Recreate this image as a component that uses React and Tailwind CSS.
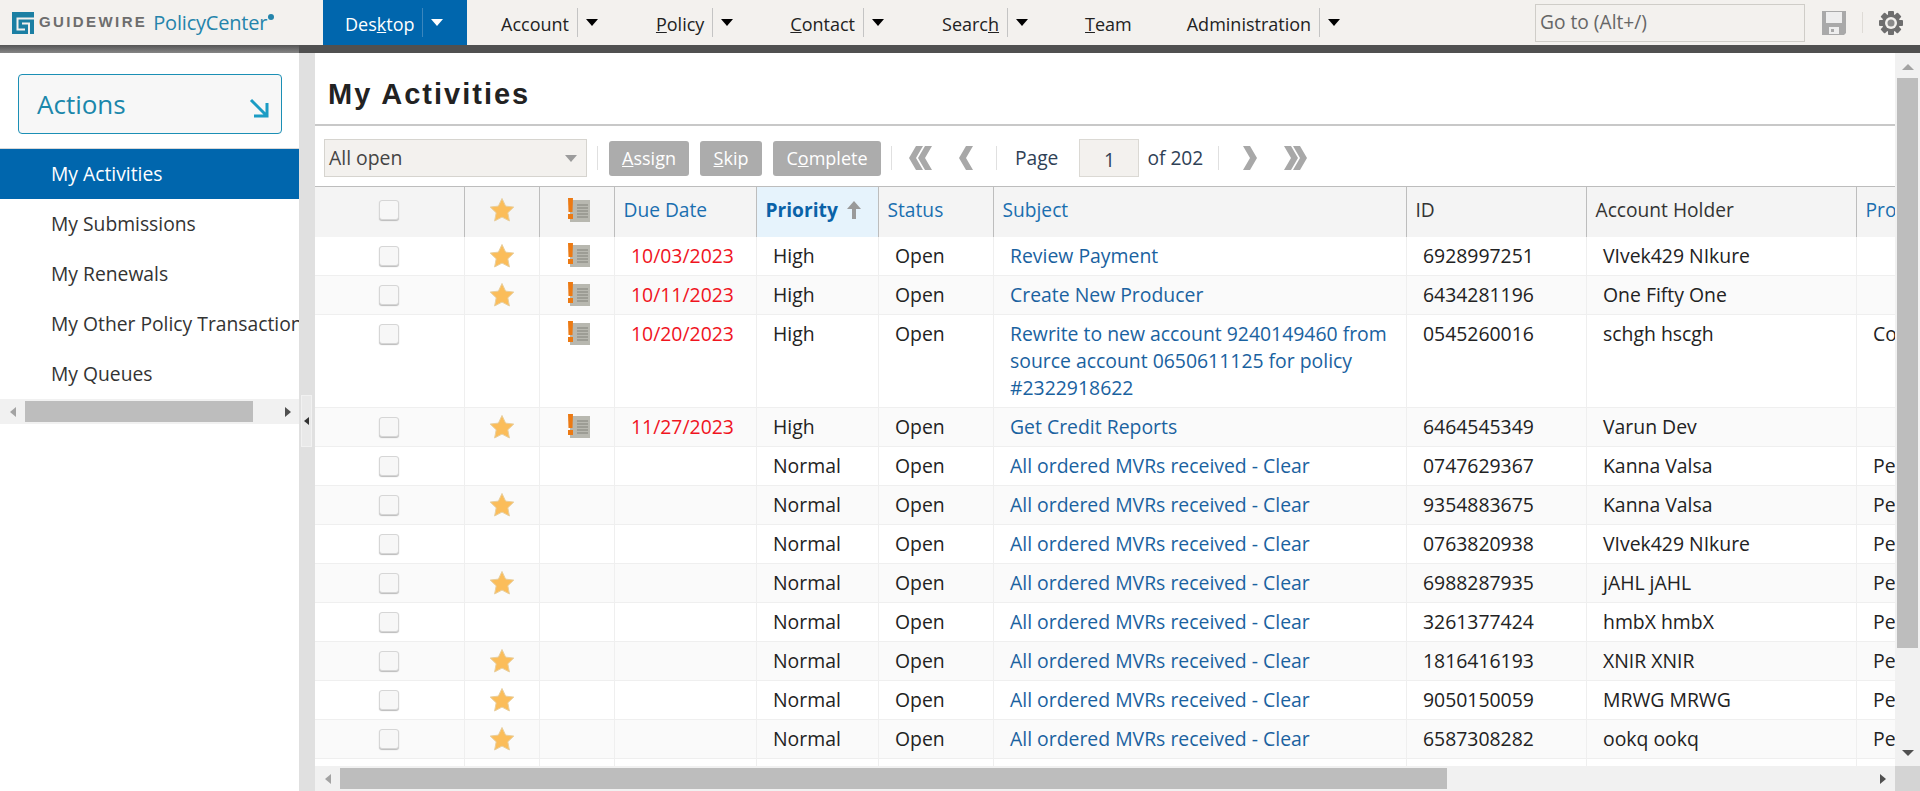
import React from "react";

const navItems = [
  { pre: "Account", u: "", post: "", caret: true, left: 34 },
  { pre: "", u: "P", post: "olicy", caret: true, left: 58 },
  { pre: "", u: "C", post: "ontact", caret: true, left: 57 },
  { pre: "Searc", u: "h", post: "", caret: true, left: 58 },
  { pre: "", u: "T", post: "eam", caret: false, left: 57 },
  { pre: "Administration", u: "", post: "", caret: true, left: 55 },
];

const sideItems = ["My Activities", "My Submissions", "My Renewals", "My Other Policy Transactions", "My Queues"];

const mvr = "All ordered MVRs received - Clear";
const rows = [
  { star: 1, flag: 1, due: "10/03/2023", pri: "High", subject: "Review Payment", id: "6928997251", holder: "VIvek429 NIkure", prod: "" },
  { star: 1, flag: 1, due: "10/11/2023", pri: "High", subject: "Create New Producer", id: "6434281196", holder: "One Fifty One", prod: "" },
  { star: 0, flag: 1, due: "10/20/2023", pri: "High", subject: "Rewrite to new account 9240149460 from source account 0650611125 for policy #2322918622", id: "0545260016", holder: "schgh hscgh", prod: "Commercial" },
  { star: 1, flag: 1, due: "11/27/2023", pri: "High", subject: "Get Credit Reports", id: "6464545349", holder: "Varun Dev", prod: "" },
  { star: 0, flag: 0, due: "", pri: "Normal", subject: mvr, id: "0747629367", holder: "Kanna Valsa", prod: "Personal Auto" },
  { star: 1, flag: 0, due: "", pri: "Normal", subject: mvr, id: "9354883675", holder: "Kanna Valsa", prod: "Personal Auto" },
  { star: 0, flag: 0, due: "", pri: "Normal", subject: mvr, id: "0763820938", holder: "VIvek429 NIkure", prod: "Personal Auto" },
  { star: 1, flag: 0, due: "", pri: "Normal", subject: mvr, id: "6988287935", holder: "jAHL jAHL", prod: "Personal Auto" },
  { star: 0, flag: 0, due: "", pri: "Normal", subject: mvr, id: "3261377424", holder: "hmbX hmbX", prod: "Personal Auto" },
  { star: 1, flag: 0, due: "", pri: "Normal", subject: mvr, id: "1816416193", holder: "XNIR XNIR", prod: "Personal Auto" },
  { star: 1, flag: 0, due: "", pri: "Normal", subject: mvr, id: "9050150059", holder: "MRWG MRWG", prod: "Personal Auto" },
  { star: 1, flag: 0, due: "", pri: "Normal", subject: mvr, id: "6587308282", holder: "ookq ookq", prod: "Personal Auto" },
];

function Caret({ className = "" }) {
  return <span className={`inline-block w-0 h-0 border-x-[6px] border-x-transparent border-t-[7px] ${className}`} />;
}

function Checkbox() {
  return <span className="block mx-auto w-5 h-5 rounded-[3px] bg-[#f7f7f7] border border-[#d6d6d6] shadow-[0_1px_1px_#bbb]" />;
}

function Star() {
  return (
    <svg width="26" height="26" viewBox="0 0 26 26" className="block mx-auto">
      <path d="M13 1.500l3.600 7.600 8.200 1-6 5.700 1.600 8.200L13 20.100 5.600 24l1.600-8.200-6-5.700 8.200-1z" fill="#fbbd5a" stroke="#e8cf9f" strokeWidth="1" />
    </svg>
  );
}

function EscalationIcon() {
  return (
    <svg width="22" height="24" viewBox="0 0 22 24" className="block mx-auto">
      <rect x="2" y="2" width="20" height="22" fill="#b8b8b0" />
      <path d="M9 7h11M9 10h11M9 13h11M9 16h11M9 19h11" stroke="#82827a" strokeWidth="1.200" />
      <path d="M0 0h5l-.5 14H.5z" fill="#ec7a14" />
      <rect x="0" y="16" width="5" height="5" fill="#ec7a14" />
    </svg>
  );
}

function Chevron({ double, right }) {
  return (
    <svg width={double ? 25 : 16} height="24" viewBox={double ? "0 0 25 24" : "0 0 16 24"} className={right ? "" : "-scale-x-100"}>
      <path d="M1 0h7l7 12-7 12H1l7-12z" fill="#a8a8a8" />
      {double && <path d="M10 0h7l7 12-7 12h-7l7-12z" fill="#a8a8a8" />}
    </svg>
  );
}

function Btn({ pre, u, post, className }) {
  return (
    <button className={`h-[35px] rounded-[3px] bg-[#acacac] text-white text-[18px] ${className}`}>
      {pre}<span className="underline">{u}</span>{post}
    </button>
  );
}

function Gear() {
  return (
    <svg width="24" height="24" viewBox="0 0 24 24">
      {[0, 45, 90, 135].map((a) => (
        <rect key={a} x="9" y="0" width="6" height="24" rx="1" fill="#6e6e6e" transform={`rotate(${a} 12 12)`} />
      ))}
      <circle cx="12" cy="12" r="9" fill="#6e6e6e" />
      <circle cx="12" cy="12" r="6" fill="#f3f1ee" />
      <circle cx="12" cy="12" r="3.500" fill="#8a8a8a" />
    </svg>
  );
}

function TopBar() {
  return (
    <header className="h-[45px] bg-[#f3f1ee] flex items-center shrink-0">
      <div className="w-[323px] flex items-center pl-3 overflow-hidden">
        <svg width="22" height="22" viewBox="0 0 22 22" className="shrink-0">
          <rect width="22" height="22" fill="#1b7fa3" />
          <path d="M22 6.500H5.500V17.500H13M10 11.500H17V22" stroke="#f3f1ee" strokeWidth="2" fill="none" />
        </svg>
        <span className="ml-[5px] font-['Liberation_Sans',sans-serif] font-bold text-[15px] tracking-[2.4px] text-[#6d6d6d]">GUIDEWIRE</span>
        <span className="ml-[6px] text-[20px] text-[#2484ab] tracking-[-0.2px]">PolicyCenter</span>
        <span className="ml-px -mt-3 w-[6px] h-[6px] rounded-full bg-[#2484ab]" />
      </div>
      <div className="h-full w-[144px] bg-[#0066ad] text-white text-[18px] flex items-center pl-[22px]">
        <span className="pt-[3px]">Des<span className="underline">k</span>top</span>
        <span className="w-px h-[29px] bg-[#3b86bd] ml-2" />
        <Caret className="border-t-white ml-[8px]" />
      </div>
      {navItems.map((n) => (
        <div key={n.pre + n.post} className="flex items-center text-[18px] text-[#222]" style={{ marginLeft: n.left }}>
          <span className="pt-[3px]">{n.pre}<span className="underline">{n.u}</span>{n.post}</span>
          {n.caret && <span className="w-px h-[29px] bg-[#c4c4c4] ml-2" />}
          {n.caret && <Caret className="border-t-black ml-[8px]" />}
        </div>
      ))}
      <div className="ml-auto flex items-center pr-[17px]">
        <div className="w-[270px] h-[38px] border border-[#cfcdc8] flex items-center pl-1 text-[19.2px] text-[#666] mr-px">Go to (Alt+/)</div>
        <svg width="24" height="24" viewBox="0 0 24 24" className="ml-4">
          <path d="M0 0h24v22l-2 2H0z" fill="#a9a9a9" />
          <rect x="4" y="1" width="16" height="11" fill="#eeeeee" />
          <rect x="7" y="16" width="10" height="7" fill="#eeeeee" />
          <rect x="9" y="18" width="3" height="3" fill="#a9a9a9" />
        </svg>
        <span className="w-px h-[21px] bg-[#dedbd6] ml-4 mr-4" />
        <Gear />
      </div>
    </header>
  );
}

function Sidebar() {
  return (
    <aside className="w-[299px] shrink-0 overflow-hidden bg-white">
      <div className="h-[96px] border-b border-[#d8d8d8] pt-[21px] px-[18px]">
        <button className="w-[264px] h-[60px] rounded-[4px] border border-[#1b8fb5] bg-[#f7f7f7] flex items-center justify-between pl-[18px] pr-3 text-[#1b87ab] text-[26px]">
          <span>Actions</span>
          <svg width="20" height="20" viewBox="0 0 20 20" className="mt-2">
            <path d="M2 2l15 15M18 5v13H5" stroke="#1b9cc4" strokeWidth="3" fill="none" />
          </svg>
        </button>
      </div>
      {sideItems.map((s, i) => (
        <div key={s} className={`h-[50px] flex items-center pl-[51px] text-[19.3px] whitespace-nowrap ${i === 0 ? "bg-[#0066ad] text-white" : "text-[#333]"}`}>{s}</div>
      ))}
      <div className="h-[25px] bg-[#f1f1f1] flex items-center">
        <span className="w-[25px] flex justify-center"><span className="border-y-[5.500px] border-y-transparent border-r-[6px] border-r-[#a3a3a3]" /></span>
        <span className="w-[228px] h-[21px] bg-[#bdbdbd]" />
        <span className="ml-[32px] border-y-[5.500px] border-y-transparent border-l-[6px] border-l-[#505050]" />
      </div>
    </aside>
  );
}

function Splitter() {
  return (
    <div className="w-[16px] shrink-0 bg-[#e0e0e0] pt-[342px] pl-[2px]">
      <div className="w-[11px] h-[52px] bg-[#e9e9e9] border border-[#f1f1f1] flex items-center justify-center">
        <span className="border-y-[4px] border-y-transparent border-r-[5px] border-r-[#333]" />
      </div>
    </div>
  );
}

function Toolbar() {
  return (
    <div className="h-[60px] flex items-center pl-[9px] pt-1">
      <div className="w-[263px] h-[38px] bg-[#f3f1ee] border border-[#d6d4cf] flex items-center justify-between pl-1 pr-[9px] text-[19.4px] text-[#444]">
        <span>All open</span>
        <Caret className="border-t-[#9c9c9c]" />
      </div>
      <span className="w-px h-[24px] bg-[#e0e0e0] ml-[10px] mr-[11px]" />
      <div className="flex gap-[11px]">
        <Btn u="A" post="ssign" className="w-[80px]" />
        <Btn u="S" post="kip" className="w-[62px]" />
        <Btn pre="C" u="o" post="mplete" className="w-[108px]" />
      </div>
      <span className="w-px h-[24px] bg-[#e0e0e0] ml-[10px] mr-[16px]" />
      <Chevron double />
      <span className="ml-[25px]"><Chevron /></span>
      <span className="w-px h-[24px] bg-[#e0e0e0] ml-[22px] mr-[18px]" />
      <span className="text-[19.2px] text-[#2f4156]">Page</span>
      <div className="ml-[21px] w-[60px] h-[38px] bg-[#f3f1ee] border border-[#dbd9d4] flex items-center justify-center text-[19.2px] text-[#2f4156] pt-1">1</div>
      <span className="ml-[8px] text-[19.2px] text-[#2f4156]">of 202</span>
      <span className="w-px h-[24px] bg-[#e0e0e0] ml-[15px] mr-[23px]" />
      <Chevron right />
      <span className="ml-[25px]"><Chevron double right /></span>
    </div>
  );
}

function ActivityTable() {
  const th = "h-[50px] border-r border-[#bdbdbd] text-[19.2px] pb-[3px] whitespace-nowrap overflow-hidden";
  const thText = `${th} font-normal bg-[#f4f4f4] text-left px-[9px]`;
  const thIcon = `${th} font-normal bg-[#f4f4f4] text-center`;
  const td = "border-r border-[#efefef] align-top text-[19.4px] pt-[5px] pb-[6px] px-[16.5px] leading-[27px]";
  const tdIcon = "border-r border-[#efefef] align-top pt-[6px] pb-[6px]";
  return (
    <table className="table-fixed border-collapse w-[1699px]">
      <colgroup>
        <col className="w-[149px]" />
        <col className="w-[75px]" />
        <col className="w-[75px]" />
        <col className="w-[142px]" />
        <col className="w-[122px]" />
        <col className="w-[115px]" />
        <col className="w-[413px]" />
        <col className="w-[180px]" />
        <col className="w-[270px]" />
        <col className="w-[158px]" />
      </colgroup>
      <thead>
        <tr className="border-t border-[#bdbdbd]">
          <th className={thIcon}><Checkbox /></th>
          <th className={thIcon}><Star /></th>
          <th className={`${thIcon} pl-1`}><EscalationIcon /></th>
          <th className={`${thText} text-[#1a6fb0]`}>Due Date</th>
          <th className={`${th} bg-[#e6f3fc] text-left px-[9px] text-[#0a62a8] font-bold`}>
            Priority
            <svg width="16" height="18" viewBox="0 0 16 18" className="inline-block ml-2 -mt-[3px]">
              <path d="M8 0l7 8h-5v10H6V8H1z" fill="#9a9a9a" />
            </svg>
          </th>
          <th className={`${thText} text-[#1a6fb0]`}>Status</th>
          <th className={`${thText} text-[#1a6fb0]`}>Subject</th>
          <th className={`${thText} text-[#333]`}>ID</th>
          <th className={`${thText} text-[#333]`}>Account Holder</th>
          <th className={`${thText} text-[#1a6fb0]`}>Product</th>
        </tr>
      </thead>
      <tbody>
        {rows.map((r) => (
          <tr key={r.id} className="border-b border-[#efefef] even:bg-[#fafafa]">
            <td className={`${tdIcon} !pt-[9px]`}><Checkbox /></td>
            <td className={tdIcon}>{r.star ? <Star /> : null}</td>
            <td className={`${tdIcon} pl-1`}>{r.flag ? <EscalationIcon /> : null}</td>
            <td className={`${td} text-[#f0141e]`}>{r.due}</td>
            <td className={`${td} text-[#222]`}>{r.pri}</td>
            <td className={`${td} text-[#222]`}>Open</td>
            <td className={`${td} text-[#1a62a0]`}>{r.subject}</td>
            <td className={`${td} text-[#222]`}>{r.id}</td>
            <td className={`${td} text-[#222]`}>{r.holder}</td>
            <td className={`${td} text-[#222] whitespace-nowrap`}>{r.prod}</td>
          </tr>
        ))}
        <tr className="h-[39px]">
          <td className={tdIcon} /><td className={tdIcon} /><td className={tdIcon} /><td className={tdIcon} /><td className={tdIcon} />
          <td className={tdIcon} /><td className={tdIcon} /><td className={tdIcon} /><td className={tdIcon} /><td className={tdIcon} />
        </tr>
      </tbody>
    </table>
  );
}

export default function App() {
  return (
    <div className="h-screen flex flex-col overflow-hidden bg-white font-['Open_Sans',sans-serif]">
      <TopBar />
      <div className="h-[8px] bg-[#505050] shrink-0 flex">
        <div className="w-[299px] bg-gradient-to-b from-[#555555] to-[#858585]" />
      </div>
      <div className="flex flex-1 min-h-0">
        <Sidebar />
        <Splitter />
        <main className="flex-1 min-w-0 grid grid-cols-[1fr_25px] grid-rows-[1fr_25px]">
          <div className="min-h-0 min-w-0 overflow-hidden">
            <div className="h-[73px] border-b-[2px] border-[#c8c8c8] flex items-center pl-[13px] pt-[12px] font-['Liberation_Sans',sans-serif] font-bold text-[29px] tracking-[2px] text-[#222]">My Activities</div>
            <Toolbar />
            <ActivityTable />
          </div>
          <div className="bg-[#f1f1f1] flex flex-col items-center pt-[11px] min-h-0">
            <span className="border-x-[6px] border-x-transparent border-b-[6px] border-b-[#a3a3a3]" />
            <span className="w-[21px] h-[570px] bg-[#bdbdbd] mt-[8px]" />
            <span className="mt-auto mb-[10px] border-x-[6px] border-x-transparent border-t-[6px] border-t-[#505050]" />
          </div>
          <div className="bg-[#f1f1f1] flex items-center">
            <span className="w-[25px] flex justify-center"><span className="border-y-[5.500px] border-y-transparent border-r-[6px] border-r-[#a3a3a3]" /></span>
            <span className="w-[1107px] h-[21px] bg-[#bdbdbd]" />
            <span className="ml-auto mr-[9px] border-y-[5.500px] border-y-transparent border-l-[6px] border-l-[#505050]" />
          </div>
          <div className="bg-[#d4d4d4]" />
        </main>
      </div>
    </div>
  );
}
